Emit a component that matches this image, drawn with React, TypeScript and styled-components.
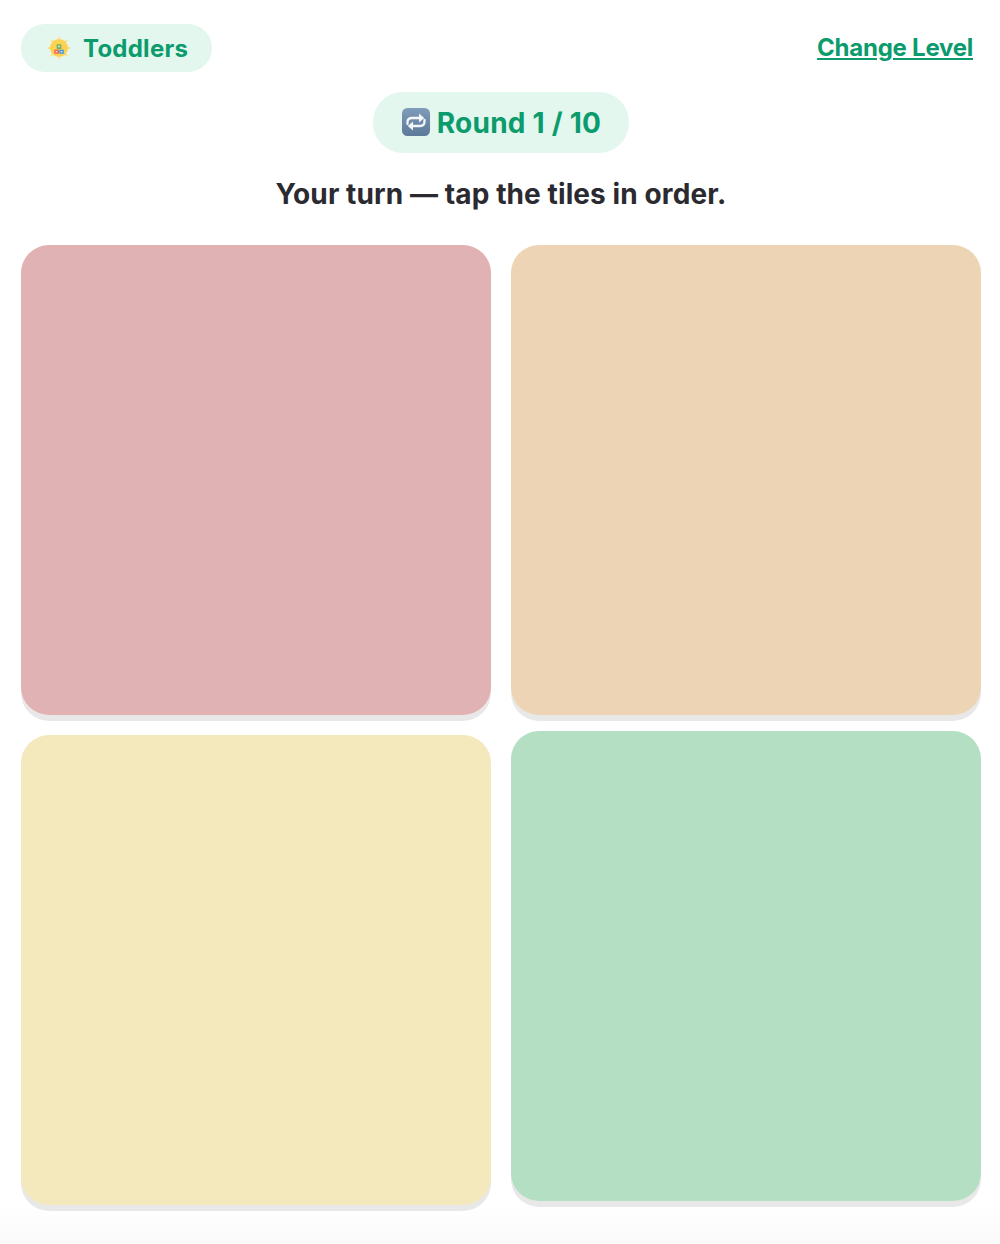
import styled, { createGlobalStyle } from "styled-components";

const GlobalStyle = createGlobalStyle`
  html, body {
    margin: 0;
    padding: 0;
  }
  body {
    min-height: 1244px;
    font-family: Inter, "Liberation Sans", sans-serif;
    background: linear-gradient(to bottom, #ffffff 1205px, #fafafa 1244px);
  }
`;

const Page = styled.main`
  box-sizing: border-box;
  width: 1000px;
  padding: 24px 19px 0 21px;
`;

const TopBar = styled.header`
  display: flex;
  justify-content: space-between;
  align-items: center;
`;

const LevelPill = styled.div`
  box-sizing: border-box;
  width: 191px;
  height: 48px;
  padding-left: 26px;
  display: flex;
  align-items: center;
  gap: 12px;
  border-radius: 24px;
  background: #e3f7ee;
  color: #0b9b6d;
  font-size: 24px;
  font-weight: 700;
  letter-spacing: 0.25px;
`;

const ChangeLevel = styled.a`
  margin: 0 8px 2px 0;
  color: #0b9b6d;
  font-size: 24px;
  font-weight: 700;
  letter-spacing: -0.25px;
  text-decoration: underline;
  cursor: pointer;
`;

const RoundRow = styled.div`
  margin-top: 20px;
  display: flex;
  justify-content: center;
`;

const RoundPill = styled.div`
  box-sizing: border-box;
  height: 61px;
  width: 256px;
  display: flex;
  align-items: center;
  justify-content: center;
  gap: 6px;
  border-radius: 30px;
  background: #e3f7ee;
  color: #0b9b6d;
  font-size: 28px;
  font-weight: 700;
  letter-spacing: 0.25px;
`;

const RepeatSvg = styled.svg`
  margin-bottom: 2px;
`;

const Prompt = styled.p`
  margin: 22px 0 0;
  text-align: center;
  color: #2a2a30;
  font-size: 28px;
  font-weight: 700;
  line-height: 38px;
  letter-spacing: 0.1px;
`;

const TileGrid = styled.div`
  margin-top: 32px;
  display: grid;
  grid-template-columns: 470px 470px;
  grid-auto-rows: 470px;
  gap: 20px;
`;

const Tile = styled.button<{ $color: string; $raised?: boolean }>`
  display: block;
  padding: 0;
  border: 0;
  border-radius: 28px;
  background: ${(props) => props.$color};
  box-shadow: 0 6px 0 #e8e8e8;
  transform: translateY(${(props) => (props.$raised ? "-4px" : "0")});
  cursor: pointer;
`;

const SunIcon = () => (
  <svg width="24" height="24" viewBox="0 0 24 24" aria-hidden="true">
    <g stroke="#fddf8c" strokeWidth="1.8" strokeLinecap="round">
      <path d="M12 1.5v3M12 19.5v3M1.5 12h3M19.5 12h3M4.4 4.4l2 2M17.6 17.6l2 2M4.4 19.6l2-2M17.6 6.4l2-2" />
    </g>
    <circle cx="12" cy="12" r="9" fill="#fdd24f" />
    <rect x="9.7" y="8.3" width="4.6" height="4.7" fill="#6fae6b" />
    <rect x="11" y="9.7" width="2" height="1.6" fill="#cfe6c2" />
    <rect x="7.3" y="13.7" width="4.7" height="4" fill="#f0605c" />
    <rect x="8.7" y="15" width="1.8" height="1.4" fill="#fbd3cf" />
    <rect x="12.3" y="13.7" width="4.5" height="4" fill="#3d97dc" />
    <rect x="13.6" y="15" width="1.8" height="1.4" fill="#cfe6f8" />
  </svg>
);

const RepeatIcon = () => (
  <RepeatSvg width="30" height="30" viewBox="0 0 30 30" aria-hidden="true">
    <defs>
      <linearGradient id="repeatFill" x1="0" y1="0" x2="0" y2="1">
        <stop offset="0" stopColor="#7f9cb8" />
        <stop offset="1" stopColor="#5c7a99" />
      </linearGradient>
    </defs>
    <rect x="1" y="1" width="28" height="28" rx="5.5" fill="url(#repeatFill)" />
    <g fill="none" stroke="#f4f7fa" strokeWidth="2.3" strokeLinecap="round">
      <path d="M6.5 17v-1.6c0-2.8 1.8-4.4 4.4-4.4h7.6" />
      <path d="M23.5 13v1.6c0 2.8-1.8 4.4-4.4 4.4h-7.6" />
    </g>
    <path d="M18 6.6l5.2 4.4L18 15.4z" fill="#f4f7fa" />
    <path d="M12 14.6l-5.2 4.4L12 23.4z" fill="#f4f7fa" />
  </RepeatSvg>
);

const tiles = [
  { id: "red", color: "#e0b2b3" },
  { id: "orange", color: "#edd4b4" },
  { id: "yellow", color: "#f4e8bd" },
  { id: "green", color: "#b5dfc3", raised: true },
];

export default function App() {
  return (
    <>
      <GlobalStyle />
      <Page>
        <TopBar>
          <LevelPill>
            <SunIcon />
            Toddlers
          </LevelPill>
          <ChangeLevel>Change Level</ChangeLevel>
        </TopBar>
        <RoundRow>
          <RoundPill>
            <RepeatIcon />
            Round 1 / 10
          </RoundPill>
        </RoundRow>
        <Prompt>Your turn — tap the tiles in order.</Prompt>
        <TileGrid>
          {tiles.map((tile) => (
            <Tile key={tile.id} $color={tile.color} $raised={tile.raised} />
          ))}
        </TileGrid>
      </Page>
    </>
  );
}
